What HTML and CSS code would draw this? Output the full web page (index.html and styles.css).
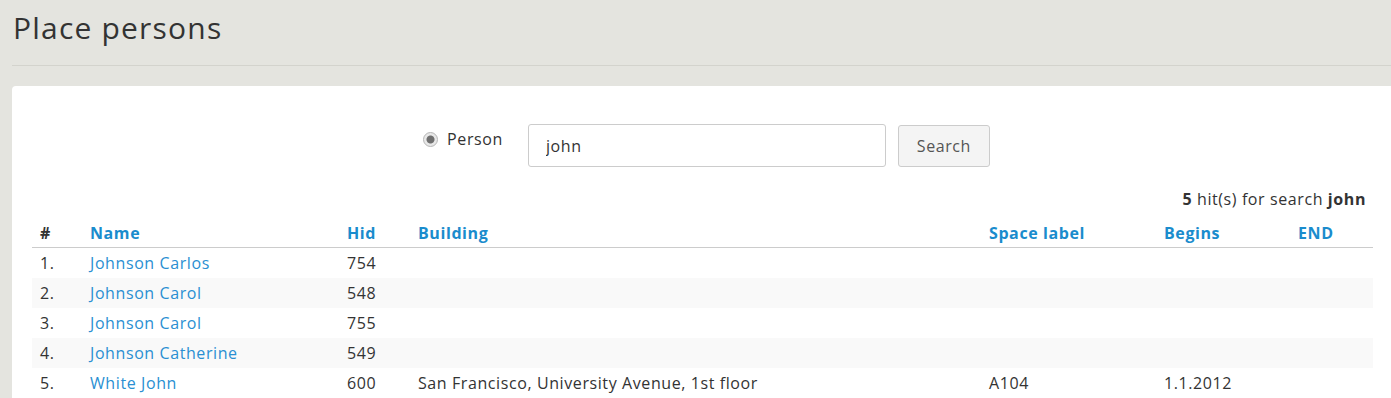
FILE: index.html
```html
<!DOCTYPE html>
<html lang="en">
<head>
    <meta charset="UTF-8">
    <meta name="viewport" content="width=device-width, initial-scale=1.0">
    <title>Place persons</title>
    <link rel="stylesheet" href="styles.css">
</head>
<body>
    <div class="page-header">
        <h1>Place persons</h1>
    </div>
    <div class="panel">
        <form class="search-form" id="searchForm">
            <label class="radio-label">
                <input type="radio" name="target" value="person" checked disabled>
                Person
            </label>
            <input type="text" class="search-input" id="query" name="query" value="john">
            <button type="submit" class="search-button">Search</button>
        </form>
        <div class="hits"><b>5</b> hit(s) for search <b>john</b></div>
        <table class="results">
            <colgroup>
                <col style="width: 50px">
                <col style="width: 257px">
                <col style="width: 71px">
                <col style="width: 571px">
                <col style="width: 175px">
                <col style="width: 134px">
                <col style="width: 83px">
            </colgroup>
            <thead>
                <tr>
                    <th class="num">#</th>
                    <th><a href="#">Name</a></th>
                    <th><a href="#">Hid</a></th>
                    <th><a href="#">Building</a></th>
                    <th><a href="#">Space label</a></th>
                    <th><a href="#">Begins</a></th>
                    <th><a href="#">END</a></th>
                </tr>
            </thead>
            <tbody>
                <tr>
                    <td>1.</td>
                    <td><a href="#">Johnson Carlos</a></td>
                    <td>754</td>
                    <td></td>
                    <td></td>
                    <td></td>
                    <td></td>
                </tr>
                <tr>
                    <td>2.</td>
                    <td><a href="#">Johnson Carol</a></td>
                    <td>548</td>
                    <td></td>
                    <td></td>
                    <td></td>
                    <td></td>
                </tr>
                <tr>
                    <td>3.</td>
                    <td><a href="#">Johnson Carol</a></td>
                    <td>755</td>
                    <td></td>
                    <td></td>
                    <td></td>
                    <td></td>
                </tr>
                <tr>
                    <td>4.</td>
                    <td><a href="#">Johnson Catherine</a></td>
                    <td>549</td>
                    <td></td>
                    <td></td>
                    <td></td>
                    <td></td>
                </tr>
                <tr>
                    <td>5.</td>
                    <td><a href="#">White John</a></td>
                    <td>600</td>
                    <td>San Francisco, University Avenue, 1st floor</td>
                    <td>A104</td>
                    <td>1.1.2012</td>
                    <td></td>
                </tr>
            </tbody>
        </table>
    </div>
</body>
</html>
```

FILE: styles.css
```css
body {
    font-family: "Open Sans", "Noto Sans", sans-serif;
    font-size: 16px;
    letter-spacing: 0.037em;
    color: #333;
    background-color: #e4e4df;
    margin: 0;
    padding: 0 0 0 12px;
    overflow: hidden;
}
.page-header {
    border-bottom: 1px solid #d3d3cd;
    padding: 8px 0 17px 1px;
}
.page-header h1 {
    font-size: 30px;
    font-weight: 400;
    line-height: 40px;
    letter-spacing: 0.04em;
    margin: 0;
    color: #333;
}
.panel {
    background-color: white;
    margin-top: 20px;
    border-radius: 4px 0 0 0;
    padding: 20px 18px 0 20px;
}
.search-form {
    display: flex;
    justify-content: center;
    align-items: flex-start;
    margin-top: 18px;
    padding-left: 8px;
}
.radio-label {
    display: flex;
    align-items: center;
    gap: 9px;
    margin-top: 4px;
    margin-right: 25px;
    line-height: 22px;
}
.radio-label input {
    appearance: none;
    -webkit-appearance: none;
    width: 15px;
    height: 15px;
    margin: 0;
    border: 1px solid #b5b5b5;
    border-radius: 50%;
    background: radial-gradient(circle, #6f6f6f 0, #6f6f6f 3.5px, #e8e8e8 4.5px);
    box-sizing: border-box;
}
.search-input {
    width: 358px;
    height: 43px;
    box-sizing: border-box;
    border: 1px solid #ccc;
    border-radius: 3px;
    padding: 0 17px;
    font-family: inherit;
    font-size: 16px;
    letter-spacing: inherit;
    color: #333;
}
.search-button {
    margin-left: 12px;
    margin-top: 1px;
    width: 92px;
    height: 42px;
    background-color: #f4f4f4;
    border: 1px solid #ccc;
    border-radius: 3px;
    color: #555;
    font-family: inherit;
    font-size: 16px;
    letter-spacing: inherit;
    cursor: pointer;
}
.hits {
    text-align: right;
    margin-top: 19px;
    padding-right: 7px;
    line-height: 26px;
}
.results {
    width: 100%;
    border-collapse: collapse;
    table-layout: fixed;
}
.results th {
    text-align: left;
    font-weight: 700;
    padding: 10px 8px 3px;
    line-height: 22px;
    border-bottom: 1px solid #ccc;
}
.results th a {
    color: #1a8ccd;
    text-decoration: none;
}
.results td {
    padding: 4px 8px;
    line-height: 22px;
    height: 22px;
}
.results td a {
    color: #2a8fd2;
    text-decoration: none;
}
.results tbody tr:nth-child(even) {
    background-color: #f9f9f9;
}
```
